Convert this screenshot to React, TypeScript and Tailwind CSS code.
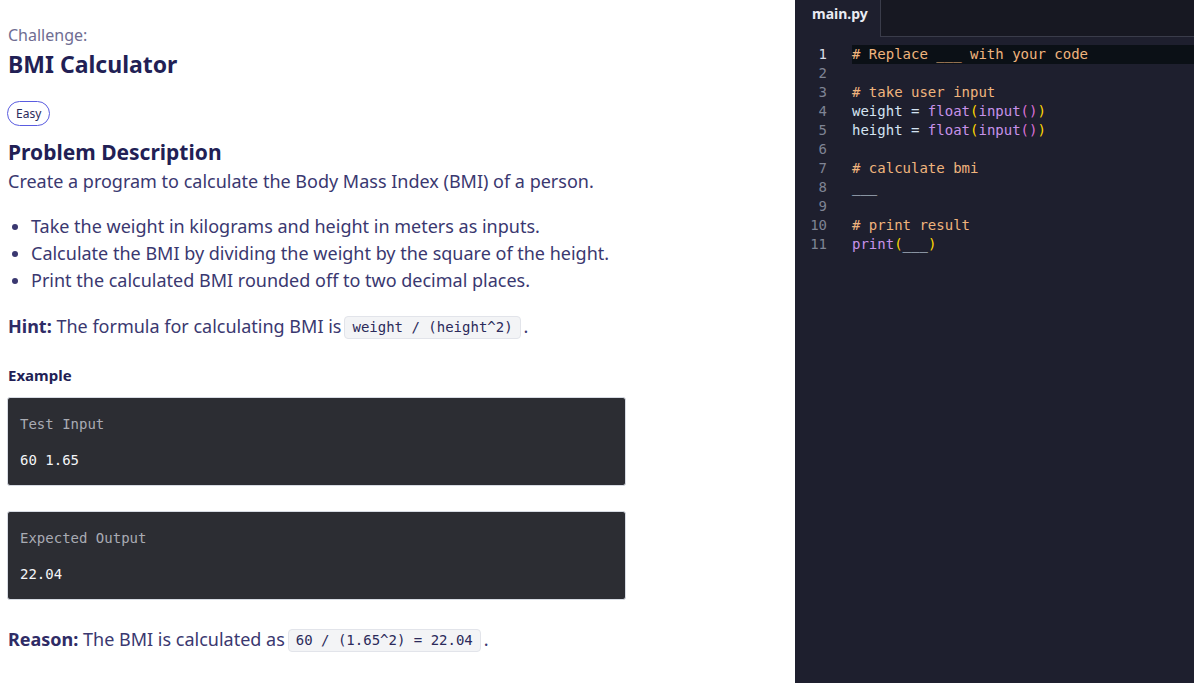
import React from "react";

const sans = { fontFamily: "'Noto Sans', Lato, sans-serif" };

function Code({ children }: { children: React.ReactNode }) {
  return (
    <code className="mx-[3px] inline-block rounded-[4px] border border-[#e2e4ea] bg-[#f3f4f6] px-[7px] py-[1px] align-[1px] font-['DejaVu_Sans_Mono',monospace] text-[14px] leading-[19px] text-[#2b2a5a]">
      {children}
    </code>
  );
}

function IOBox({ label, value }: { label: string; value: string }) {
  return (
    <div className="flex h-[89px] w-[619px] flex-col rounded-[3px] border border-[#d7dbe3] bg-[#2c2d33] px-[12px] pt-[17px] font-['DejaVu_Sans_Mono',monospace] text-[14px] leading-[18px]">
      <div className="text-[#a9abb3]">{label}</div>
      <div className="mt-[18px] text-[#f4f5f8]">{value}</div>
    </div>
  );
}

const C = {
  com: "text-[#f0b47d]",
  id: "text-[#d4e3f2]",
  fn: "text-[#c792ea]",
  y: "text-[#ffd700]",
  p: "text-[#da70d6]",
};

const lines: React.ReactNode[] = [
  <span className={C.com}># Replace ___ with your code</span>,
  <span />,
  <span className={C.com}># take user input</span>,
  <span>
    <span className={C.id}>weight = </span>
    <span className={C.fn}>float</span>
    <span className={C.y}>(</span>
    <span className={C.fn}>input</span>
    <span className={C.p}>()</span>
    <span className={C.y}>)</span>
  </span>,
  <span>
    <span className={C.id}>height = </span>
    <span className={C.fn}>float</span>
    <span className={C.y}>(</span>
    <span className={C.fn}>input</span>
    <span className={C.p}>()</span>
    <span className={C.y}>)</span>
  </span>,
  <span />,
  <span className={C.com}># calculate bmi</span>,
  <span className={C.id}>___</span>,
  <span />,
  <span className={C.com}># print result</span>,
  <span>
    <span className={C.fn}>print</span>
    <span className={C.y}>(</span>
    <span className={C.id}>___</span>
    <span className={C.y}>)</span>
  </span>,
];

export default function App() {
  return (
    <div className="flex h-[683px] w-[1194px] overflow-hidden bg-white">
      <div className="w-[795px] shrink-0 pl-[8px] pt-[24px] text-[#3a3870]" style={sans}>
        <div className="text-[16px] leading-[22px] text-[#6f6d92]">Challenge:</div>
        <h1 className="mt-[3px] text-[23px] font-bold leading-[30px] text-[#221f55]">BMI Calculator</h1>
        <div className="mt-[22px] flex">
          <span className="-ml-[1px] rounded-full border border-[#5a5ce0] px-[8px] text-[12px] leading-[23px] text-[#2b2a5a]">
            Easy
          </span>
        </div>
        <h2 className="mt-[12px] text-[21px] font-bold leading-[28px] text-[#221f55]">Problem Description</h2>
        <p className="mt-[2px] text-[18px] leading-[27px]">
          Create a program to calculate the Body Mass Index (BMI) of a person.
        </p>
        <ul className="mt-[18px] list-disc pl-[23px] text-[18px] leading-[27px]">
          <li>Take the weight in kilograms and height in meters as inputs.</li>
          <li>Calculate the BMI by dividing the weight by the square of the height.</li>
          <li>Print the calculated BMI rounded off to two decimal places.</li>
        </ul>
        <p className="mt-[19px] text-[18px] leading-[27px]">
          <b className="font-bold text-[#2f2c66]">Hint:</b> The formula for calculating BMI is
          <Code>weight / (height^2)</Code>.
        </p>
        <h3 className="mt-[24px] text-[15px] font-bold leading-[22px] text-[#221f55]">Example</h3>
        <div className="-ml-[1px] mt-[11px] flex flex-col gap-[25px]">
          <IOBox label="Test Input" value="60 1.65" />
          <IOBox label="Expected Output" value="22.04" />
        </div>
        <p className="mt-[26px] text-[18px] leading-[27px]">
          <b className="font-bold text-[#2f2c66]">Reason:</b> The BMI is calculated as
          <Code>60 / (1.65^2) = 22.04</Code>.
        </p>
      </div>
      <div className="flex flex-1 flex-col bg-[#1e1f2e]">
        <div className="flex h-[37px]">
          <div className="w-[85px] pl-[17px] pt-[4px] text-[14px] font-bold leading-[20px] text-[#e9ebf3]" style={sans}>
            main.py
          </div>
          <div className="flex-1 border-b border-l border-[#3a3c4a] bg-[#171822]" />
        </div>
        <div className="pt-[8px] font-['DejaVu_Sans_Mono',monospace] text-[14px] leading-[19px]">
          {lines.map((l, i) => (
            <div key={i} className="flex h-[19px]">
              <div className={`w-[32px] shrink-0 text-right ${i === 0 ? "text-[#d8dce6]" : "text-[#7f8494]"}`}>{i + 1}</div>
              <div className={`ml-[25px] flex-1 whitespace-pre ${i === 0 ? "bg-[#0b1016]" : ""}`}>{l}</div>
            </div>
          ))}
        </div>
      </div>
    </div>
  );
}
